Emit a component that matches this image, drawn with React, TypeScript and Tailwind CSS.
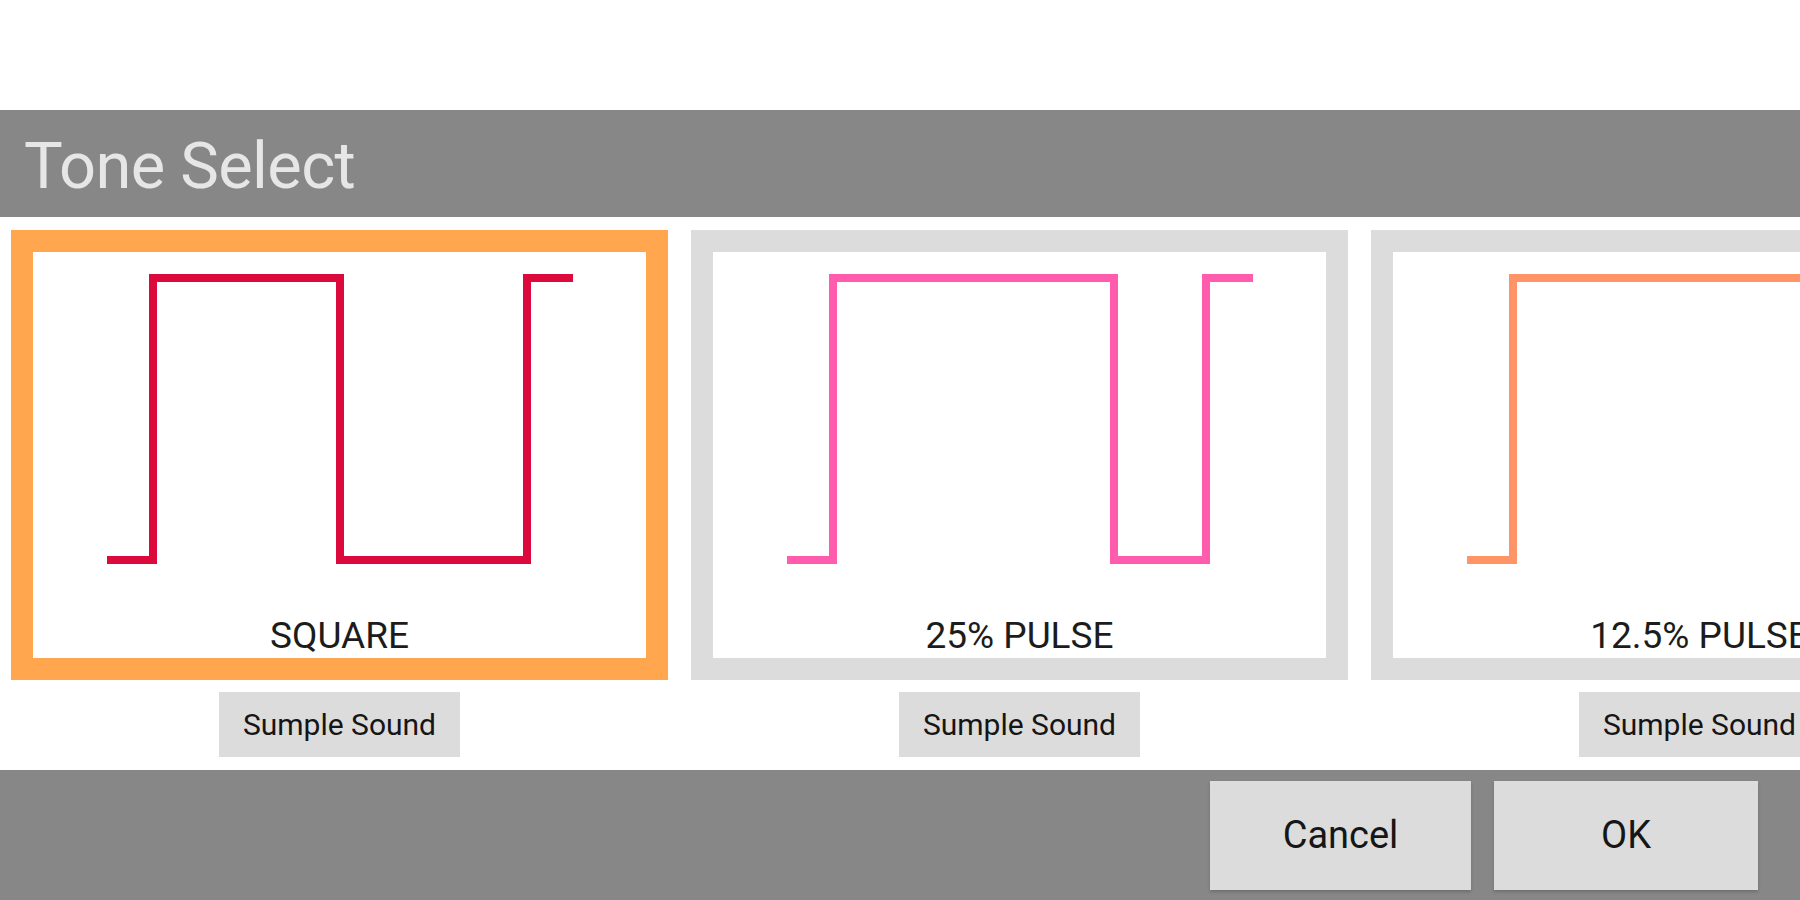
import React, { useState } from 'react';

type Tone = {
  id: string;
  label: string;
  color: string;
  // x positions (inner card coords) of fall and second rise
  fall: number;
  rise: number;
};

const TONES: Tone[] = [
  { id: 'square', label: 'SQUARE', color: '#dc0a3c', fall: 307, rise: 494 },
  { id: 'p25', label: '25% PULSE', color: '#ff5cae', fall: 401, rise: 493 },
  { id: 'p125', label: '12.5% PULSE', color: '#ff9466', fall: 447, rise: 494 },
];

const Wave = ({ tone }: { tone: Tone }) => {
  const low = 308;
  const high = 26;
  const pts = [
    [74, low],
    [120, low],
    [120, high],
    [tone.fall, high],
    [tone.fall, low],
    [tone.rise, low],
    [tone.rise, high],
    [540, high],
  ]
    .map(p => p.join(','))
    .join(' ');
  return (
    <svg width="613" height="365" viewBox="0 0 613 365" className="block shrink-0">
      <polyline points={pts} fill="none" stroke={tone.color} strokeWidth="8" strokeLinejoin="miter" strokeLinecap="butt" />
    </svg>
  );
};

export default function App() {
  const [selected, setSelected] = useState('square');

  return (
    <div className="w-[1800px] h-[900px] bg-white overflow-hidden flex flex-col font-['Roboto',sans-serif]">
      {/* empty top area */}
      <div className="h-[110px] shrink-0" />

      {/* dialog title */}
      <div className="h-[107px] shrink-0 bg-[#878787] pl-[24px] pt-[24px]">
        <h1 className="text-[65px] leading-none text-[#e6e6e6] font-normal tracking-[-0.6px]">Tone Select</h1>
      </div>

      {/* tone cards */}
      <div className="mt-[13px] flex gap-[23px] pl-[11px] overflow-hidden shrink-0">
        {TONES.map(tone => (
          <div key={tone.id} className="w-[657px] shrink-0 flex flex-col items-center">
            <button
              type="button"
              onClick={() => setSelected(tone.id)}
              className={`w-[657px] h-[450px] border-[22px] bg-white flex flex-col items-center ${
                selected === tone.id ? 'border-[#ffa64f]' : 'border-[#dcdcdc]'
              }`}
            >
              <Wave tone={tone} />
              <span className="text-[37px] leading-none text-[#1c1c1c] whitespace-nowrap">{tone.label}</span>
            </button>
            <button
              type="button"
              className="mt-[12px] h-[65px] px-[24px] bg-[#dcdcdc] text-[30px] leading-none text-[#151515] whitespace-nowrap"
            >
              Sumple Sound
            </button>
          </div>
        ))}
      </div>

      {/* footer buttons */}
      <div className="mt-[13px] flex-1 bg-[#878787] flex justify-end gap-[23px] pt-[11px] pr-[42px]">
        <button type="button" className="w-[261px] h-[109px] bg-[#dcdcdc] text-[38px] text-[#161616] shadow-[0_2px_3px_rgba(0,0,0,0.18)]">
          Cancel
        </button>
        <button type="button" className="w-[264px] h-[109px] bg-[#dcdcdc] text-[38px] text-[#161616] shadow-[0_2px_3px_rgba(0,0,0,0.18)]">
          OK
        </button>
      </div>
    </div>
  );
}
